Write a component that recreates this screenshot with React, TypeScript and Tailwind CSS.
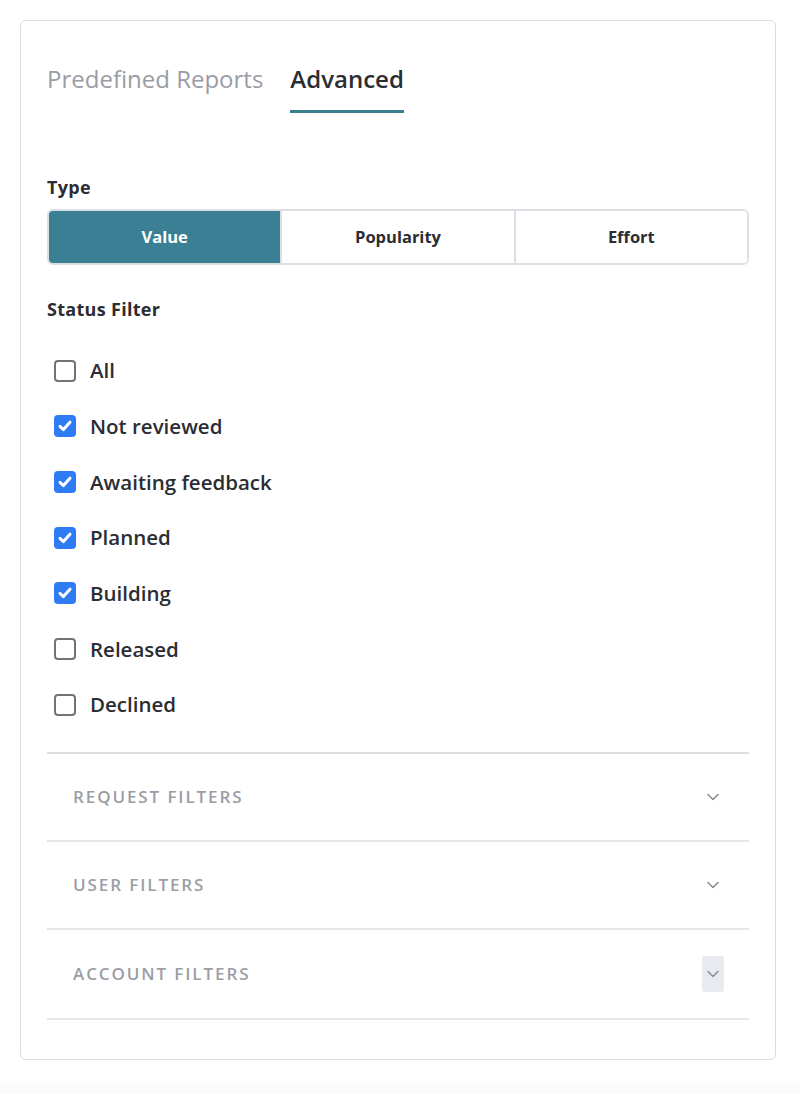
import { useState } from 'react';

const FONT = { fontFamily: '"Open Sans", "Noto Sans", sans-serif' };

const statuses = [
  { label: 'All', checked: false },
  { label: 'Not reviewed', checked: true },
  { label: 'Awaiting feedback', checked: true },
  { label: 'Planned', checked: true },
  { label: 'Building', checked: true },
  { label: 'Released', checked: false },
  { label: 'Declined', checked: false },
];

const sections = ['Request Filters', 'User Filters', 'Account Filters'];

function Chevron() {
  return (
    <svg width="16" height="16" viewBox="0 0 16 16" fill="none">
      <path d="M3 5.5L8 10.5L13 5.5" stroke="#8e9098" strokeWidth="1.6" strokeLinecap="round" strokeLinejoin="round" />
    </svg>
  );
}

function Checkbox({ checked }: { checked: boolean }) {
  if (checked) {
    return (
      <span className="w-[22px] h-[22px] rounded-[4px] bg-[#2f7bf3] flex items-center justify-center shrink-0">
        <svg width="16" height="16" viewBox="0 0 16 16" fill="none">
          <path d="M3 8.4L6.4 11.6L13 4.2" stroke="white" strokeWidth="3" strokeLinecap="round" strokeLinejoin="round" />
        </svg>
      </span>
    );
  }
  return <span className="w-[22px] h-[22px] rounded-[4px] border-2 border-[#737373] bg-white shrink-0" />;
}

export default function App() {
  const [tab, setTab] = useState('advanced');
  const [type, setType] = useState('Value');
  const [checks, setChecks] = useState(statuses.map(s => s.checked));
  const [openSection, setOpenSection] = useState<number | null>(null);

  return (
    <div className="min-h-screen bg-[#fbfbfb]" style={FONT}>
      <div className="bg-white pt-5 pb-[21px] pl-5">
        <div className="w-[756px] border-[1.5px] border-[#dcdce3] rounded-[6px] bg-white px-[26px] pt-[42px] pb-[39px]">
          {/* Tabs */}
          <div className="flex gap-[27px]">
            <button
              onClick={() => setTab('predefined')}
              className={`text-[24px] leading-[32px] pb-[15px] border-b-[3px] ${
                tab === 'predefined' ? 'text-[#2b2d33] font-semibold border-[#3a7f8f]' : 'text-[#9a9ca4] border-transparent'
              }`}
            >
              Predefined Reports
            </button>
            <button
              onClick={() => setTab('advanced')}
              className={`text-[24px] leading-[32px] pb-[15px] border-b-[3px] ${
                tab === 'advanced' ? 'text-[#2b2d33] font-semibold border-[#3a7f8f]' : 'text-[#9a9ca4] border-transparent'
              }`}
            >
              Advanced
            </button>
          </div>

          {/* Type */}
          <h3 className="mt-[62px] text-[18px] leading-[24px] font-bold tracking-[0.3px] text-[#2b2d33]">Type</h3>
          <div className="mt-[10px] h-[56px] flex border-2 border-[#dcdfe3] rounded-[6px] overflow-hidden">
            {['Value', 'Popularity', 'Effort'].map((t, i) => (
              <button
                key={t}
                onClick={() => setType(t)}
                className={`flex-1 text-[16.5px] font-bold ${i > 0 ? 'border-l-2 border-[#dcdfe3]' : ''} ${
                  type === t ? 'bg-[#3a7f94] text-white' : 'bg-white text-[#2b2d33]'
                }`}
              >
                {t}
              </button>
            ))}
          </div>

          {/* Status Filter */}
          <h3 className="mt-[32px] text-[18px] leading-[24px] font-bold tracking-[0.3px] text-[#2b2d33]">Status Filter</h3>
          <div className="mt-[22px] flex flex-col">
            {statuses.map((s, i) => (
              <label
                key={s.label}
                className="h-[55.67px] flex items-center gap-[14px] pl-[7px] cursor-pointer"
                onClick={() => setChecks(c => c.map((v, j) => (j === i ? !v : v)))}
              >
                <Checkbox checked={checks[i]} />
                <span className="text-[20.5px] font-semibold text-[#2b2d33]">{s.label}</span>
              </label>
            ))}
          </div>

          {/* Accordion sections */}
          <div className="mt-[19px] border-t-2 border-[#dcdee3]">
            {sections.map((name, i) => (
              <div key={name} className="border-b-2 border-[#e6e7ec]">
                <button
                  onClick={() => setOpenSection(openSection === i ? null : i)}
                  className={`w-full flex items-center justify-between pl-[26px] pr-[25px] ${
                    i === 2 ? 'h-[88px]' : 'h-[86px]'
                  }`}
                >
                  <span className="text-[17px] font-semibold uppercase tracking-[1.9px] text-[#9b9da5]">{name}</span>
                  <span
                    className={`w-[22px] h-[36px] rounded-[3px] flex items-center justify-center ${
                      i === 2 ? 'bg-[#e9eaef]' : ''
                    }`}
                  >
                    <Chevron />
                  </span>
                </button>
              </div>
            ))}
          </div>
        </div>
      </div>
    </div>
  );
}
